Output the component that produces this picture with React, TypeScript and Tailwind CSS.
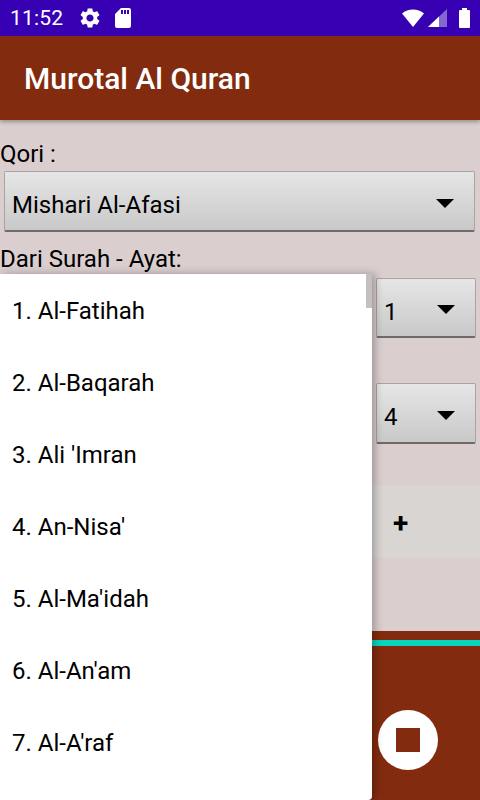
const rows = ["1. Al-Fatihah", "2. Al-Baqarah", "3. Ali 'Imran", "4. An-Nisa'", "5. Al-Ma'idah", "6. Al-An'am", "7. Al-A'raf"];

function Caret() {
  return (
    <svg width="18" height="9" viewBox="0 0 18 9" className="mt-[4px] shrink-0">
      <path d="M0 0h18l-9 9z" fill="#000" />
    </svg>
  );
}

function Spinner({ label, className }: { label: string; className: string }) {
  return (
    <div className={`flex items-center justify-between rounded-[2px] border border-[#a9a3a3] border-b-2 border-b-[#6f6b6b] bg-gradient-to-b from-[#e6e6e6] to-[#c9c9c9] ${className}`}>
      <span className="pt-[8px] text-[24px] text-black">{label}</span>
      <Caret />
    </div>
  );
}

function StatusBar() {
  return (
    <div className="flex h-9 shrink-0 items-center bg-[#3700b3] pl-[10px] pr-[10px] text-white">
      <span className="text-[21px] leading-none tracking-[0.2px]">11:52</span>
      <svg width="24" height="24" viewBox="0 0 24 24" fill="#fff" className="ml-[15px]">
        <path d="M19.14 12.94c.04-.3.06-.61.06-.94 0-.32-.02-.64-.07-.94l2.03-1.58c.18-.14.23-.41.12-.61l-1.92-3.32c-.12-.22-.37-.29-.59-.22l-2.39.96c-.5-.38-1.03-.7-1.62-.94l-.36-2.54c-.04-.24-.24-.41-.48-.41h-3.84c-.24 0-.43.17-.47.41l-.36 2.54c-.59.24-1.13.57-1.62.94l-2.39-.96c-.22-.08-.47 0-.59.22L2.74 8.87c-.12.21-.08.47.12.61l2.03 1.58c-.05.3-.09.63-.09.94s.02.64.07.94l-2.03 1.58c-.18.14-.23.41-.12.61l1.92 3.32c.12.22.37.29.59.22l2.39-.96c.5.38 1.03.7 1.62.94l.36 2.54c.05.24.24.41.48.41h3.84c.24 0 .44-.17.47-.41l.36-2.54c.59-.24 1.13-.56 1.62-.94l2.39.96c.22.08.47 0 .59-.22l1.92-3.32c.12-.22.07-.47-.12-.61l-2.01-1.58zM12 15.6c-1.98 0-3.6-1.62-3.6-3.6s1.62-3.6 3.6-3.6 3.6 1.62 3.6 3.6-1.62 3.6-3.6 3.6z" />
      </svg>
      <svg width="24" height="24" viewBox="0 0 24 24" fill="#fff" className="ml-[9px]">
        <path d="M18 2h-8L4.02 8 4 20c0 1.1.9 2 2 2h12c1.1 0 2-.9 2-2V4c0-1.1-.9-2-2-2zm-6 6h-2V4h2v4zm3 0h-2V4h2v4zm3 0h-2V4h2v4z" />
      </svg>
      <div className="flex-1" />
      <svg width="22" height="20" viewBox="0 0 22 20" fill="#fff">
        <path d="M11 19L0 5.500C3 3 6.800 1.500 11 1.500S19 3 22 5.500z" />
      </svg>
      <svg width="19" height="20" viewBox="0 0 19 20" className="ml-[4px]">
        <path d="M0 19L19 1v18z" fill="#8567d4" />
        <path d="M0 19l11-10.400V19z" fill="#fff" />
      </svg>
      <svg width="11" height="20" viewBox="0 0 11 20" fill="#fff" className="ml-[12px]">
        <path d="M3 0h5v2h2a1 1 0 0 1 1 1v16a1 1 0 0 1-1 1H1a1 1 0 0 1-1-1V3a1 1 0 0 1 1-1h2z" />
      </svg>
    </div>
  );
}

export default function App() {
  return (
    <div className="relative flex h-[800px] w-[480px] flex-col overflow-hidden bg-[#dacece] font-['Roboto',sans-serif]">
      <StatusBar />

      <div className="z-10 flex h-[84px] shrink-0 items-center bg-[#832b0e] pl-6 shadow-[0_2px_4px_rgba(0,0,0,0.3)]">
        <h1 className="text-[30px] font-medium text-white">Murotal Al Quran</h1>
      </div>

      <div className="flex flex-1 flex-col">
        <div className="mt-[20px] h-[28px] text-[24px] leading-[28px] text-black">Qori :</div>
        <Spinner label="Mishari Al-Afasi" className="ml-1 mr-[5px] mt-[3px] h-[61px] pl-[7px] pr-[20px]" />
        <div className="mt-[13px] h-[28px] text-[24px] leading-[28px] text-black">Dari Surah - Ayat:</div>
        <div className="mt-[5px] flex justify-end pr-1">
          <Spinner label="1" className="h-[60px] w-[100px] pl-[7px] pr-[20px]" />
        </div>
        <div className="mt-[45px] flex justify-end pr-1">
          <Spinner label="4" className="h-[61px] w-[100px] pl-[7px] pr-[20px]" />
        </div>
        <div className="mt-[42px] flex h-[72px] items-center bg-[#d9d5d2] pl-[393px]">
          <span className="pt-[3px] text-[28px] font-bold text-black">+</span>
        </div>
        <div className="mt-[73px] flex flex-1 flex-col bg-[#832b0e] pt-[9px]">
          <div className="h-[6px] bg-[#0bd5bd]" />
          <div className="flex flex-1 items-start justify-end pr-[42px] pt-[64px]">
            <div className="flex h-[60px] w-[60px] items-center justify-center rounded-full bg-white">
              <div className="h-6 w-6 bg-[#832b0e]" />
            </div>
          </div>
        </div>
      </div>

      {/* dropdown popup over the form */}
      <div className="absolute left-0 top-[274px] z-20 h-[526px] w-[372px] overflow-hidden rounded-br-[4px] bg-white shadow-[3px_0_8px_rgba(0,0,0,0.28)]">
        {rows.map((r) => (
          <div key={r} className="flex h-[72px] items-center pl-3 pt-[2px] text-[24px] text-black">
            {r}
          </div>
        ))}
        <div className="absolute right-0 top-0 h-[34px] w-[6px] bg-[#c4c0c0]" />
      </div>
    </div>
  );
}
